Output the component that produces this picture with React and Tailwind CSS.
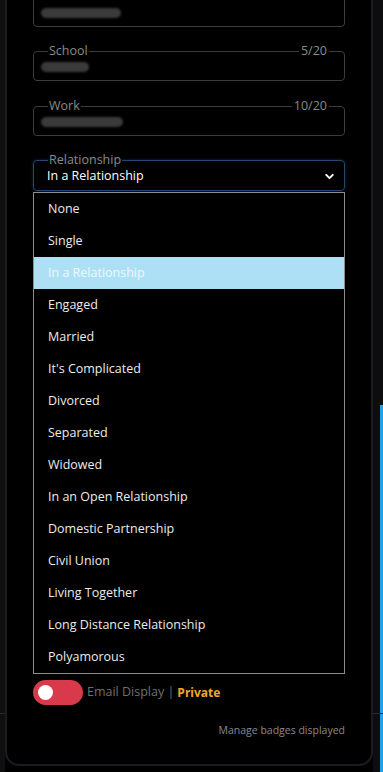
import { ChevronDown } from 'lucide-react';

const options = [
  'None',
  'Single',
  'In a Relationship',
  'Engaged',
  'Married',
  "It's Complicated",
  'Divorced',
  'Separated',
  'Widowed',
  'In an Open Relationship',
  'Domestic Partnership',
  'Civil Union',
  'Living Together',
  'Long Distance Relationship',
  'Polyamorous',
];

const font = { fontFamily: '"Open Sans", "Noto Sans", sans-serif' };

function Field({ label, count, blob, className = '' }) {
  return (
    <div className={`relative ${className}`}>
      <fieldset className="h-[38px] rounded-[4px] border border-[#3c3c3c] pl-[14px]">
        <legend className="px-[1px] text-[12.5px] leading-[16px] text-[#8a8a8a]">{label}</legend>
        <div className={`mt-[3px] h-[10px] rounded-full bg-[#3a3a3a] blur-[1px] -ml-[7px] ${blob}`} />
      </fieldset>
      {count && (
        <span className="absolute right-[16px] top-0 bg-black px-[2px] text-[12.5px] leading-[16px] text-[#8a8a8a]">
          {count}
        </span>
      )}
    </div>
  );
}

export default function App() {
  return (
    <div className="relative flex h-[772px] w-[383px] overflow-hidden bg-black" style={font}>
      <div className="absolute left-0 right-0 top-[713px] h-px bg-[#2a2a2e]" />
      <div className="w-[5px] bg-[#0f0f10]" />
      <div className="relative z-10 h-[766px] w-[368px] rounded-b-[14px] border-x-2 border-b-2 border-[#1c1c20] bg-black pl-[26px] pr-[26px]">
        <div className="-mt-[11px] h-[38px] rounded-[4px] border border-[#3c3c3c] pl-[7px] pt-[18px]">
          <div className="h-[10px] w-[80px] rounded-full bg-[#3a3a3a] blur-[1px]" />
        </div>

        <Field className="mt-[16px]" label="School" count="5/20" blob="w-[48px]" />
        <Field className="mt-[17px]" label="Work" count="10/20" blob="w-[82px]" />

        <fieldset className="mt-[16px] h-[39px] rounded-[4px] border border-[#24466f] pl-[14px] pr-[8px] shadow-[0_0_3px_rgba(40,90,160,0.5)]">
          <legend className="px-[1px] text-[12.5px] leading-[16px] text-[#8a8a8a]">Relationship</legend>
          <div className="-ml-[1px] -mt-[1px] flex items-center justify-between text-[12.5px] leading-[18px] text-white">
            <span>In a Relationship</span>
            <ChevronDown size={13} strokeWidth={3.5} className="text-white" />
          </div>
        </fieldset>

        <ul className="mt-px border border-[#8c8c8c] bg-black text-[12.5px] text-[#ececec]">
          {options.map((o) => (
            <li
              key={o}
              className={`flex h-[32px] items-center pl-[14px] ${
                o === 'In a Relationship' ? 'bg-[#ade0f4] text-[#eef8fc]' : ''
              }`}
            >
              {o}
            </li>
          ))}
        </ul>

        <div className="mt-[6px] flex items-center">
          <div className="flex h-[25px] w-[50px] items-center rounded-full bg-[#d93a4b] pl-[5px]">
            <div className="h-[15px] w-[15px] rounded-full bg-white" />
          </div>
          <span className="ml-[4px] text-[12.5px] text-[#6f6f6f]">Email Display |</span>
          <span className="ml-[3px] text-[12px] font-bold text-[#f2a630]">Private</span>
        </div>

        <p className="mt-[18px] text-right text-[10.5px] text-[#8a8a8a]">Manage badges displayed</p>
      </div>
      <div className="flex w-[10px] justify-end bg-[#0d0d0f]">
        <div className="mt-[405px] h-[367px] w-[3px] bg-[#1aa3e8]" />
      </div>
    </div>
  );
}
